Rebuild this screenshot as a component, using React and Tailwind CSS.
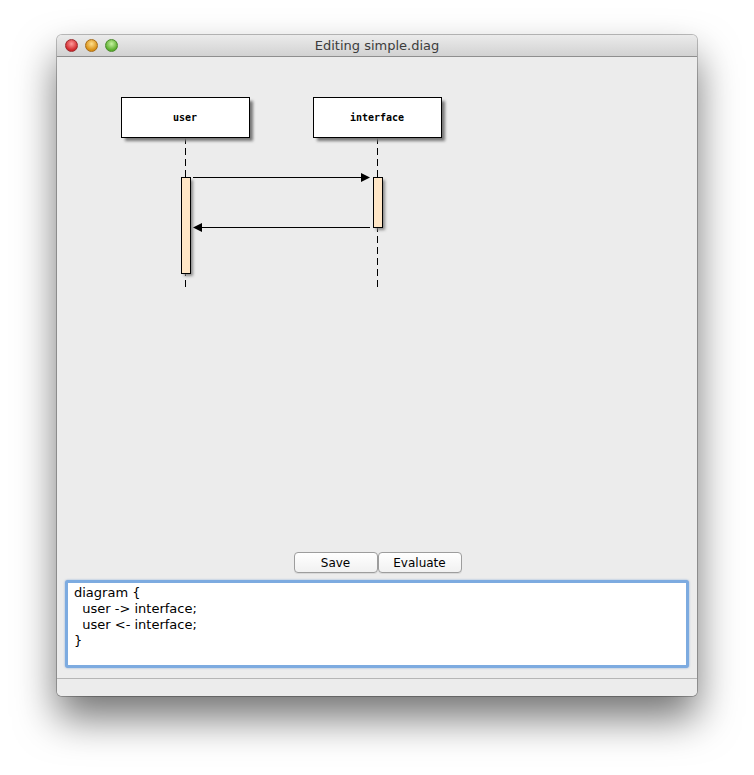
import React from 'react'

// Traffic-light dot in the title bar
function Light({ from, to, ring }) {
  return (
    <span
      className="block w-[13px] h-[13px] rounded-full border"
      style={{ background: `radial-gradient(circle at 50% 35%, ${from}, ${to} 70%)`, borderColor: ring }}
    />
  )
}

function Lifeline({ x }) {
  return <line x1={x} y1={137} x2={x} y2={290} stroke="#000" strokeWidth="1" strokeDasharray="7 4" />
}

function Actor({ x, label }) {
  return (
    <g>
      <rect x={x + 4} y={101} width={128} height={40} fill="#777" filter="url(#sh)" />
      <rect x={x + 0.5} y={97.5} width={128} height={40} fill="#fff" stroke="#000" strokeWidth="1" />
      <text
        x={x + 64}
        y={121}
        textAnchor="middle"
        fontFamily="'DejaVu Sans Mono', monospace"
        fontWeight="bold"
        fontSize="10"
      >
        {label}
      </text>
    </g>
  )
}

function Activation({ x, y, h }) {
  return (
    <g>
      <rect x={x + 3} y={y + 3} width={9} height={h} fill="#888" filter="url(#sh)" />
      <rect x={x + 0.5} y={y + 0.5} width={9} height={h} fill="#ffe6c6" stroke="#000" strokeWidth="1" />
    </g>
  )
}

function Diagram() {
  return (
    <svg className="block" width="640" height="495" viewBox="57 57 640 495">
      <defs>
        <filter id="sh" x="-50%" y="-50%" width="200%" height="200%">
          <feGaussianBlur stdDeviation="1.6" />
        </filter>
      </defs>
      <Lifeline x={185.5} />
      <Lifeline x={377.5} />
      <Actor x={121} label="user" />
      <Actor x={313} label="interface" />
      <Activation x={181} y={177} h={96} />
      <Activation x={373} y={177} h={50} />
      <line x1={193} y1={177.5} x2={363} y2={177.5} stroke="#000" strokeWidth="1" />
      <polygon points="361,173 370,177.5 361,182" fill="#000" />
      <line x1={200} y1={227.5} x2={370} y2={227.5} stroke="#000" strokeWidth="1" />
      <polygon points="202,223 193,227.5 202,232" fill="#000" />
    </svg>
  )
}

export default function App() {
  const ui = { fontFamily: "'Lucida Grande', 'DejaVu Sans', sans-serif" }
  const code = { fontFamily: "'DejaVu Sans', sans-serif" }
  return (
    <div className="w-[754px] h-[775px] bg-white overflow-hidden pt-[35px] pl-[57px]" style={ui}>
      <div className="w-[640px] h-[661px] flex flex-col rounded-[5px] bg-[#ececec] overflow-hidden shadow-[0_22px_40px_rgba(0,0,0,0.55),0_0_0_1px_rgba(0,0,0,0.25)]">
        {/* Title bar */}
        <div className="h-[22px] shrink-0 relative flex items-center px-[8px] gap-[7px] bg-gradient-to-b from-[#ebebeb] to-[#d2d2d2] border-b border-[#8e8e8e]">
          <Light from="#ff9a9a" to="#d0262a" ring="#9b2b2e" />
          <Light from="#ffe08c" to="#d88f14" ring="#a66c1a" />
          <Light from="#c6f2a0" to="#5aad2c" ring="#4a8a2c" />
          <span className="absolute inset-0 flex items-center justify-center text-[13px] text-[#3c3c3c]">
            Editing simple.diag
          </span>
        </div>

        {/* Diagram canvas */}
        <div className="h-[495px] shrink-0">
          <Diagram />
        </div>

        {/* Buttons */}
        <div className="h-[21px] shrink-0 flex justify-center pl-[1px]">
          <button className="w-[84px] h-[21px] rounded-[4px] border border-[#9d9d9d] bg-gradient-to-b from-white to-[#f1f1f1] text-[12px] text-black shadow-[0_1px_0_rgba(0,0,0,0.08)]">
            Save
          </button>
          <button className="w-[84px] h-[21px] rounded-[4px] border border-[#9d9d9d] bg-gradient-to-b from-white to-[#f1f1f1] text-[12px] text-black shadow-[0_1px_0_rgba(0,0,0,0.08)]">
            Evaluate
          </button>
        </div>

        {/* Editor */}
        <div className="mt-[7px] mx-[8px] h-[88px] shrink-0 rounded-[3px] border-[3px] border-[#7dabe0] shadow-[0_0_2px_rgba(60,120,200,0.6)] bg-white">
          <pre className="pl-[6px] pt-[2px] text-[13px] leading-[16px] text-black" style={code}>
{`diagram {
  user -> interface;
  user <- interface;
}`}
          </pre>
        </div>

        {/* Status bar */}
        <div className="mt-[10px] flex-1 border-t border-[#b5b5b5] bg-[#ececec]" />
      </div>
    </div>
  )
}
